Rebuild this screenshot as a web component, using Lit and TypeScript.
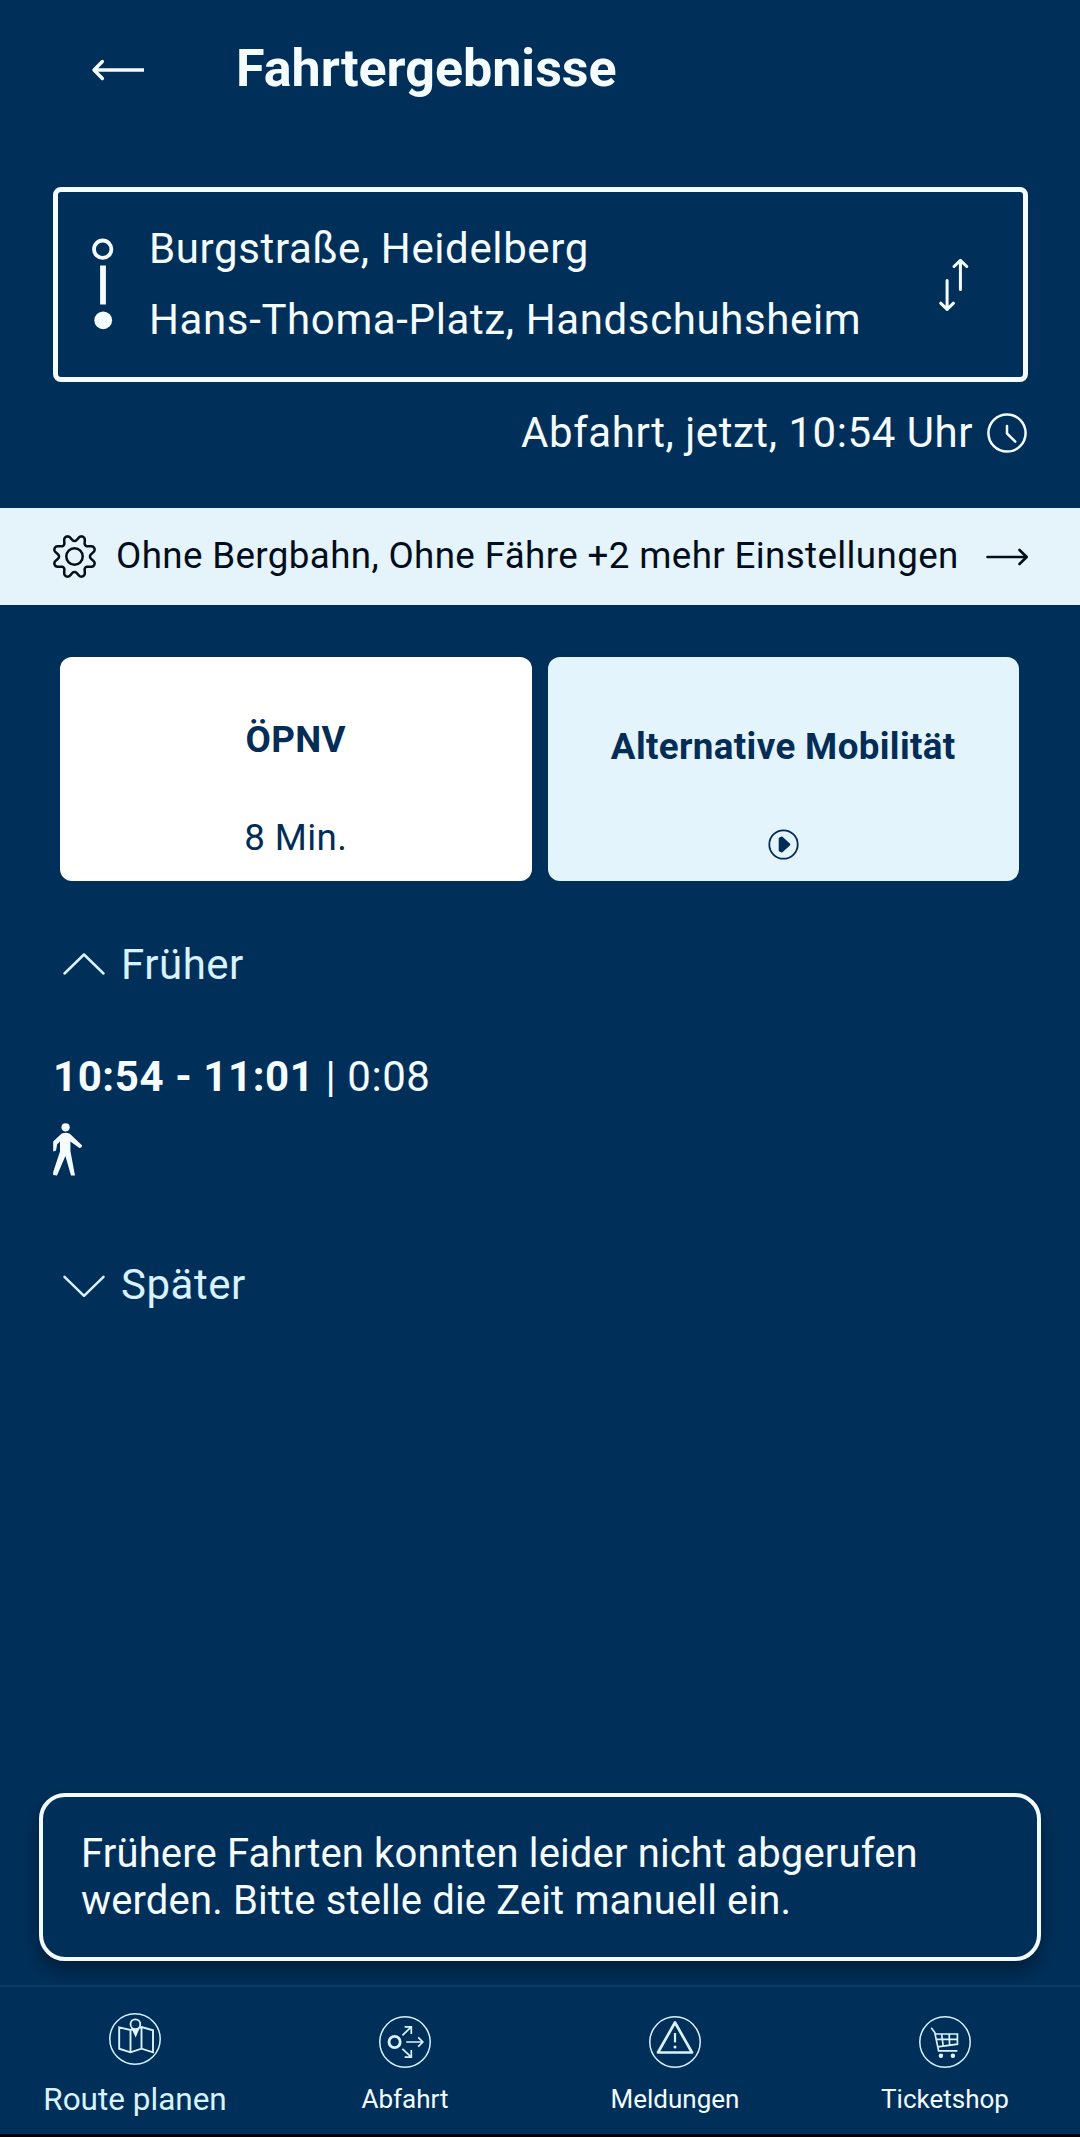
import { LitElement, html, css, svg } from "lit";
import { customElement, property } from "lit/decorators.js";

/** Closed outline of an eight-toothed cog around the origin. */
function cogPath(teeth: number, mid: number, depth: number): string {
  const steps = 160;
  const points: string[] = [];
  for (let i = 0; i < steps; i++) {
    const a = (i / steps) * Math.PI * 2;
    const wave = Math.cos(teeth * a - Math.PI);
    const r = mid + depth * (Math.tanh(1.1 * wave) / Math.tanh(1.1));
    points.push(`${(r * Math.cos(a)).toFixed(2)} ${(r * Math.sin(a)).toFixed(2)}`);
  }
  return `M${points.join("L")}Z`;
}

const ring = svg`<circle r="25.2" stroke-width="1.5" />`;

const navIcons: Record<string, unknown> = {
  map: svg`${ring}
    <path stroke-width="1.9" d="M-15.8 -11.7L-4.5 -9L6.5 -12L18 -8.7V13.3L6.5 9.7L-4.5 13.3L-15.8 9.7ZM-4.5 -9V13.3M6.5 -12V9.7" />
    <circle class="page" cx="0.4" cy="-14.8" r="4.9" stroke-width="1.8" />
    <path class="solid" d="M-4 -11.4Q0.5 -8.8 4.9 -11.4L0.7 -1.6Z" />`,
  departure: svg`${ring}
    <circle cx="-10.4" cy="0" r="5.6" stroke-width="2.8" />
    <path stroke-width="1.7" d="M1.2 0H17.8M13.2 -4.7L17.8 0L13.2 4.7M-2.6 -6.6L6.3 -15.2M-0.4 -15.2H6.3V-8M-2.6 6.8L6.3 15.2M-0.4 15.2H6.3V8" />`,
  alert: svg`${ring}
    <path stroke-width="2.7" stroke-linejoin="round" d="M0 -19.5L17 10.5H-17Z" />
    <path stroke-width="2.2" d="M0 -9V0.4" />
    <circle class="solid" cy="4.9" r="1.5" />`,
  cart: svg`${ring}
    <path stroke-width="1.7" d="M-13.8 -14.2L-10.2 -9.4L-6.4 8.8H12.4M-10 -8H12.4V2.2L-7.4 4.8M-9 -2.7H12.4M-3.4 -8L-1.8 4M4.2 -8L4.6 3.2" />
    <circle class="solid" cx="-4.1" cy="13.7" r="2.2" />
    <circle class="solid" cx="7.9" cy="13.7" r="2.2" />`,
};

@customElement("nav-item")
export class NavItem extends LitElement {
  @property() icon = "map";
  @property() label = "";
  @property({ type: Boolean, reflect: true }) active = false;

  static styles = css`
    :host {
      display: flex;
      flex-direction: column;
      align-items: center;
      gap: 12px;
      padding-top: 28px;
      color: #f2fbff;
      font-size: 26px;
    }
    :host([active]) {
      gap: 16px;
      padding-top: 25px;
      color: #d9f2ff;
      font-size: 31.5px;
    }
    svg {
      width: 54px;
      height: 54px;
      fill: none;
      stroke: #d9f2ff;
      display: block;
    }
    .solid {
      fill: #e6f7ff;
      stroke: none;
    }
    .page {
      fill: #003059;
    }
    .label {
      line-height: 36px;
      white-space: nowrap;
    }
  `;

  render() {
    return html`<svg viewBox="-27 -27 54 54">${navIcons[this.icon]}</svg>
      <span class="label">${this.label}</span>`;
  }
}

@customElement("app-root")
export class AppRoot extends LitElement {
  static styles = css`
    :host {
      display: flex;
      flex-direction: column;
      box-sizing: border-box;
      width: 1080px;
      height: 2137px;
      overflow: hidden;
      background: #003059;
      color: #f5fcff;
      font-family: Roboto, sans-serif;
      font-size: 42px;
      border-bottom: 3px solid #00030a;
    }
    * {
      box-sizing: border-box;
    }
    svg {
      display: block;
      flex: none;
      fill: none;
      stroke: currentColor;
      overflow: visible;
    }
    span {
      white-space: nowrap;
    }
    .header {
      display: flex;
      align-items: center;
      gap: 92px;
      height: 137px;
      padding-left: 92px;
    }
    .title {
      margin: 0;
      font-size: 52px;
      font-weight: 700;
      line-height: 60px;
    }
    .back {
      margin-top: 3px;
    }
    .route {
      display: flex;
      align-items: center;
      height: 195px;
      margin: 50px 52px 0 53px;
      padding: 0 54px 0 33px;
      border: 5px solid #f5fcff;
      border-radius: 8px;
    }
    .stops {
      display: flex;
      flex-direction: column;
      flex: 1;
      margin: 0 0 2px 34px;
      line-height: 71px;
      letter-spacing: 0.62px;
    }
    .when {
      display: flex;
      align-items: center;
      justify-content: flex-end;
      gap: 14px;
      height: 40px;
      margin: 31px 53px 0 0;
      letter-spacing: 0.55px;
    }
    .when-text {
      line-height: 50px;
    }
    .options {
      display: flex;
      align-items: center;
      height: 97px;
      margin-top: 55px;
      padding: 0 52px 0 53px;
      background: #e5f3fb;
      color: #020d1b;
      font-size: 36.75px;
      letter-spacing: 0.36px;
    }
    .options-text {
      flex: 1;
      margin: 0 0 1px 20px;
      line-height: 42px;
    }
    .modes {
      display: grid;
      grid-template-columns: 1fr 1fr;
      gap: 16px;
      height: 224px;
      margin: 52px 61px 0 60px;
      color: #032d56;
      font-size: 36.75px;
      letter-spacing: 0.36px;
    }
    .mode {
      display: flex;
      flex-direction: column;
      align-items: center;
      border-radius: 12px;
      background: #e3f4fc;
      line-height: 42px;
    }
    .mode.selected {
      padding-top: 62px;
      gap: 56px;
      background: #fff;
    }
    .mode.other {
      padding-top: 69px;
      gap: 61px;
    }
    .mode-name {
      font-weight: 700;
    }
    .shift {
      display: flex;
      align-items: center;
      gap: 16px;
      height: 60px;
      margin: 54px 0 0 63px;
      color: #d9f2ff;
      letter-spacing: 0.52px;
    }
    .shift-label {
      padding-bottom: 2px;
    }
    .trip {
      height: 208px;
      margin: 52px 0 0 53px;
    }
    .trip-time {
      height: 60px;
      line-height: 60px;
      white-space: nowrap;
      letter-spacing: 0.58px;
    }
    .walk {
      margin-top: 16px;
      fill: currentColor;
      stroke: none;
    }
    .later {
      margin-top: 0;
    }
    .toast {
      height: 168px;
      margin: auto 39px 24px 39px;
      padding: 33px 30px 0 38px;
      border: 4px solid #f2fbff;
      border-radius: 26px;
      box-shadow: 0 10px 18px rgba(0, 14, 32, 0.5);
      font-size: 40px;
      line-height: 47px;
      letter-spacing: 0.14px;
    }
    .toast-line {
      display: block;
    }
    .nav {
      display: grid;
      grid-template-columns: repeat(4, 1fr);
      height: 149px;
      border-top: 2px solid #0d3a66;
      background: #003059;
    }
  `;

  render() {
    return html`
      <div class="header">
        <svg class="back" width="52" height="22" viewBox="0 0 52 22" stroke-width="3.4" stroke-linejoin="round">
          <path d="M52 11H2" /><path d="M10.4 2.5L2 11L10.4 19.5" stroke-linecap="round" />
        </svg>
        <h1 class="title">Fahrtergebnisse</h1>
      </div>

      <div class="route">
        <svg width="24" height="94" viewBox="0 0 24 94">
          <circle cx="11.7" cy="11.2" r="8.7" stroke-width="3.8" />
          <path d="M12 27.5V66.5" stroke-width="5.8" />
          <circle cx="12.2" cy="82.3" r="8.9" fill="currentColor" stroke="none" />
        </svg>
        <div class="stops">
          <span>Burgstraße, Heidelberg</span>
          <span>Hans-Thoma-Platz, Handschuhsheim</span>
        </div>
        <svg width="24" height="54" viewBox="0 0 24 54" stroke-width="3" stroke-linecap="round" stroke-linejoin="round">
          <path d="M15.4 31.5V2.5M9 8.5L15.4 2.3L21.8 8.5" />
          <path d="M2.1 22.5V51.5M-4.3 45.2L2.1 51.4L8.5 45.2" />
        </svg>
      </div>

      <div class="when">
        <span class="when-text">Abfahrt, jetzt, 10:54 Uhr</span>
        <svg width="40" height="40" viewBox="0 0 40 40" stroke-width="2.5">
          <circle cx="20" cy="20" r="18.6" />
          <path d="M20 13V20.5L28.3 28.7" stroke-linecap="round" />
        </svg>
      </div>

      <div class="options">
        <svg width="43" height="43" viewBox="-21.5 -21.5 43 43" stroke-width="2.5" stroke-linejoin="round">
          <path d=${cogPath(8, 18.5, 3)} />
          <circle r="8.2" />
        </svg>
        <span class="options-text">Ohne Bergbahn, Ohne Fähre +2 mehr Einstellungen</span>
        <svg width="42" height="18" viewBox="0 0 42 18" stroke-width="2.6" stroke-linecap="round" stroke-linejoin="round">
          <path d="M1.5 9H40.5M33.5 2L40.7 9L33.5 16" />
        </svg>
      </div>

      <div class="modes">
        <div class="mode selected">
          <span class="mode-name">ÖPNV</span>
          <span>8 Min.</span>
        </div>
        <div class="mode other">
          <span class="mode-name">Alternative Mobilität</span>
          <svg width="31" height="31" viewBox="0 0 31 31" stroke-width="1.8">
            <circle cx="15.5" cy="15.5" r="14.2" />
            <path d="M12 9.6L13.6 8.8L21 15.5L13.6 22.2L12 21.4Z" fill="currentColor" stroke-width="2.6" stroke-linejoin="round" />
          </svg>
        </div>
      </div>

      <div class="shift">
        <svg width="42" height="24" viewBox="0 0 42 24" stroke-width="2.5" stroke-linecap="round" stroke-linejoin="round">
          <path d="M1.5 20.5L21 1.5L40.5 20.5" />
        </svg>
        <span class="shift-label">Früher</span>
      </div>

      <div class="trip">
        <div class="trip-time"><b>10:54 - 11:01</b> | 0:08</div>
        <svg class="walk" width="30" height="53" viewBox="0 0 30 53">
          <circle cx="12.6" cy="4.3" r="4.1" />
          <path d="M8.4 10.8Q12.6 8.8 16.8 10.8L29.2 22.4Q28.6 25 26.4 25L17.4 18.6L17.4 28L22 52.5H18L12.4 33L4 52.5L0.2 52V49L7 28.5V18.4L4.2 21.2L3 27.6L0.2 28.6V18.4Z" />
        </svg>
      </div>

      <div class="shift later">
        <svg width="42" height="24" viewBox="0 0 42 24" stroke-width="2.5" stroke-linecap="round" stroke-linejoin="round">
          <path d="M1.5 3.8L21 22.8L40.5 3.8" />
        </svg>
        <span class="shift-label">Später</span>
      </div>

      <div class="toast">
        <span class="toast-line">Frühere Fahrten konnten leider nicht abgerufen</span>
        <span class="toast-line">werden. Bitte stelle die Zeit manuell ein.</span>
      </div>

      <div class="nav">
        <nav-item active icon="map" label="Route planen"></nav-item>
        <nav-item icon="departure" label="Abfahrt"></nav-item>
        <nav-item icon="alert" label="Meldungen"></nav-item>
        <nav-item icon="cart" label="Ticketshop"></nav-item>
      </div>
    `;
  }
}
